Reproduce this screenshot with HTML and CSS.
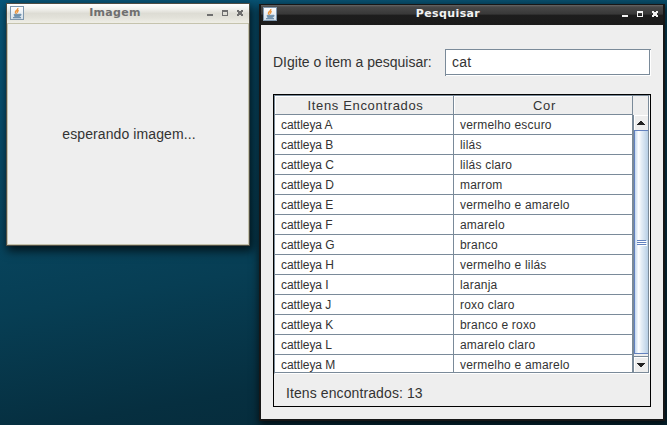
FILE: index.html
```html
<!DOCTYPE html>
<html lang="pt">
<head>
<meta charset="utf-8">
<title>Pesquisar</title>
<link rel="stylesheet" href="styles.css">
</head>
<body>
<svg class="defs" width="0" height="0">
  <defs>
    <linearGradient id="iconBg" x1="0" y1="0" x2="0" y2="1"><stop offset="0" stop-color="#fff"/><stop offset="1" stop-color="#d3dfe9"/></linearGradient>
    <symbol id="java" viewBox="0 0 14 14">
      <rect x=".5" y=".5" width="13" height="13" fill="url(#iconBg)" stroke="#7f97ad"/>
      <path d="M7.8 2C8.6 4 5.2 4.5 5.4 6.2C5.5 7 6.2 7.4 6.5 8M8.7 4.3C7.5 5 6.9 5.7 7.7 6.7" fill="none" stroke="#ec963f" stroke-width="1.4"/>
      <path d="M4 8.3h5.5v2.2H4.7zM9.7 8c2-.3 2 1.8-.2 2" fill="#6d8fab" stroke="#6d8fab" stroke-width=".8"/>
      <path d="M3 11.7h8" stroke="#5e82a1" stroke-width="1.1"/>
    </symbol>
    <symbol id="controls" viewBox="0 0 38 10">
      <path d="M1 7h6v2H1z" fill="currentColor"/>
      <path d="M16 3h6v6h-6zM17 5v3h4V5z" fill="currentColor" fill-rule="evenodd"/>
      <path d="M31 3h2v1h2V3h2v2h-1v2h1v2h-2V8h-2v1h-2V7h1V5h-1z" fill="currentColor"/>
    </symbol>
  </defs>
</svg>
<section class="window preview">
  <header class="titlebar">
    <svg class="app-icon"><use href="#java"/></svg>
    <h1>Imagem</h1>
    <svg class="controls"><use href="#controls"/></svg>
  </header>
  <main class="waiting"><span>esperando imagem...</span></main>
</section>
<section class="window search">
  <header class="titlebar">
    <svg class="app-icon"><use href="#java"/></svg>
    <h1>Pesquisar</h1>
    <svg class="controls"><use href="#controls"/></svg>
  </header>
  <main class="search-body">
    <div class="query"><label>DIgite o item a pesquisar:</label><div class="field"><span>cat</span></div></div>
    <div class="panel">
      <div class="scrollpane">
        <div class="grid">
          <div class="row head"><div><span>Itens Encontrados</span></div><div><span>Cor</span></div></div>
          <div class="row"><div>cattleya A</div><div>vermelho escuro</div></div>
          <div class="row"><div>cattleya B</div><div>lilás</div></div>
          <div class="row"><div>cattleya C</div><div>lilás claro</div></div>
          <div class="row"><div>cattleya D</div><div>marrom</div></div>
          <div class="row"><div>cattleya E</div><div>vermelho e amarelo</div></div>
          <div class="row"><div>cattleya F</div><div>amarelo</div></div>
          <div class="row"><div>cattleya G</div><div>branco</div></div>
          <div class="row"><div>cattleya H</div><div>vermelho e lilás</div></div>
          <div class="row"><div>cattleya I</div><div>laranja</div></div>
          <div class="row"><div>cattleya J</div><div>roxo claro</div></div>
          <div class="row"><div>cattleya K</div><div>branco e roxo</div></div>
          <div class="row"><div>cattleya L</div><div>amarelo claro</div></div>
          <div class="row"><div>cattleya M</div><div>vermelho e amarelo</div></div>
        </div>
        <div class="side">
          <div class="corner"></div>
          <div class="scrollbar">
            <div class="arrow up"><svg width="8" height="4" viewBox="0 0 8 4"><path d="M3 0h2v1h1v1h1v1h1v1H0V3h1V2h1V1h1z" fill="#222"/></svg></div>
            <div class="thumb"><i></i><i></i><i></i></div>
            <div class="arrow down"><svg width="8" height="4" viewBox="0 0 8 4"><path d="M0 0h8v1H7v1H6v1H5v1H3V3H2V2H1V1H0z" fill="#222"/></svg></div>
          </div>
        </div>
      </div>
      <p class="status"><span>Itens encontrados: 13</span></p>
    </div>
  </main>
</section>
</body>
</html>
```
FILE: styles.css
```css
* { box-sizing: border-box; }
body {
  margin: 0;
  width: 667px;
  height: 425px;
  overflow: hidden;
  position: relative;
  background: linear-gradient(170deg, #08577a 0%, #084a66 30%, #073e54 58%, #062f40 80%, #052836 100%);
  font-family: "Liberation Sans", Arial, sans-serif;
  color: #333;
}
.defs { position: absolute; }
.window { position: absolute; display: flex; flex-direction: column; }
.titlebar { display: flex; flex: none; align-items: flex-start; }
.titlebar h1 {
  flex: 1;
  margin: 0;
  text-align: center;
  font: bold 11px/14px "DejaVu Sans", sans-serif;
  letter-spacing: .3px;
}
.app-icon { width: 14px; height: 14px; flex: none; }
.controls { width: 38px; height: 10px; flex: none; margin-top: 1px; }

.preview {
  left: 6px;
  top: 3px;
  width: 244px;
  height: 243px;
  border: 1px solid #4f4d43;
  box-shadow: 2px 4px 9px 1px rgba(0, 0, 0, .7);
}
.preview .titlebar {
  height: 20px;
  padding: 2px 5px 0 3px;
  background: linear-gradient(#fff 0, #f2f2ee 25%, #dddcd4 50%, #e2e1d9 70%, #efeee6 100%);
  border-bottom: 1px solid #c5c3ad;
  color: #6f6f6f;
}
.preview h1 { line-height: 13px; }
.waiting {
  flex: 1;
  display: flex;
  align-items: center;
  justify-content: center;
  background: #eee;
  border: 1px solid #c5c3ad;
  border-top: 0;
  padding-left: 2px;
  font-size: 14px;
  letter-spacing: .1px;
}

.search {
  left: 259px;
  top: 4px;
  width: 406px;
  height: 417px;
  border: solid #171717;
  border-width: 1px 2px 2px;
  box-shadow: 1px 3px 8px 1px rgba(0, 0, 0, .7);
}
.search .titlebar {
  height: 20px;
  padding: 2px 4px 0 2px;
  background: linear-gradient(#666 0, #484848 10%, #383838 46%, #1d1d1d 50%, #1b1b1b 100%);
  color: #f2f2f2;
}
.search h1 { line-height: 13px; letter-spacing: .38px; padding-right: 2px; }
.search-body { flex: 1; background: #eee; padding: 24px 12px 0; }
.query { display: flex; height: 27px; justify-content: space-between; }
.query label { font-size: 14px; line-height: 27px; white-space: nowrap; }
.field {
  width: 206px;
  padding-left: 6px;
  background: #fff;
  border: 1px solid #7a8a99;
  border-right: 0;
  border-bottom: 0;
  box-shadow: inset -1px -1px #fff, inset -2px -2px #7a8a99;
  font-size: 14px;
  line-height: 25px;
  letter-spacing: .2px;
}
.panel { width: 378px; height: 313px; margin-top: 18px; border: 1px solid #000; }
.scrollpane {
  height: 279px;
  display: flex;
  border: solid #7a8a99;
  border-width: 1px 0 0 1px;
  border-right: 1px solid #fff;
  border-bottom: 1px solid #fff;
  overflow: hidden;
}
.grid { width: 358px; height: 277px; overflow: hidden; background: #fff; border-bottom: 1px solid #7a8a99; }
.row { display: grid; grid-template-columns: 179px 179px; height: 20px; font-size: 12px; line-height: 17px; }
.row > div { border-right: 1px solid #7a8a99; border-bottom: 1px solid #7a8a99; padding: 2px 0 0 6px; white-space: nowrap; letter-spacing: .2px; }
.row > div:first-child { letter-spacing: -.05px; }
.row.head { height: 19px; line-height: 16px; text-align: center; }
.row.head > div { background: #eee; padding: 2px 0 0 3px; box-shadow: inset 1px 1px #fff; font-size: 13px; letter-spacing: .65px; }
.side { width: 16px; display: flex; flex-direction: column; }
.corner { height: 19px; background: #eee; border-right: 1px solid #7a8a99; }
.scrollbar {
  height: 258px;
  display: flex;
  flex-direction: column;
  border: solid #7a8a99;
  border-width: 0 1px 1px;
  background: #eee;
}
.arrow { display: flex; align-items: center; justify-content: center; background: #eee; }
.up { height: 15px; border: solid #fff; border-width: 1px 0 0 1px; padding-right: 1px; }
.up svg { margin-top: -1px; }
.thumb {
  height: 224px;
  display: flex;
  flex-direction: column;
  align-items: center;
  justify-content: center;
  gap: 1px;
  border: solid #6382bf;
  border-width: 1px 0 1px 1px;
  background: linear-gradient(90deg, #c3d7ee, #fff 28%, #e4edf6 50%, #b8cfe5);
}
.thumb i { width: 9px; height: 1px; background: #6382bf; box-shadow: 1px 1px #fff; }
.down { height: 16px; margin-top: 2px; border: solid #7a8a99; border-width: 1px 0 0; box-shadow: inset 1px 1px #fff; }
.status { margin: 0; padding: 1px 0 0 12px; font-size: 14px; line-height: 37px; letter-spacing: .1px; }
```
